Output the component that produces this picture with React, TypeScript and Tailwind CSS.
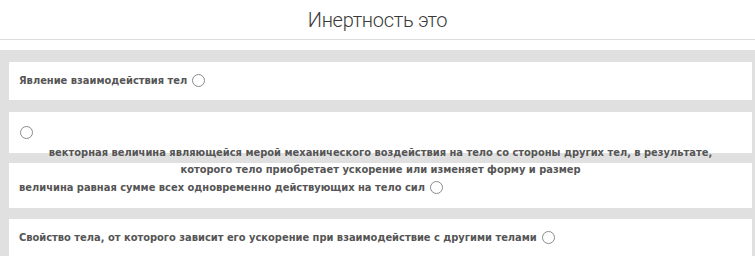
import React from 'react';

const font = { fontFamily: '"DejaVu Sans Condensed", "DejaVu Sans", Verdana, sans-serif' };

function Radio() {
  return <span className="inline-block w-[13px] h-[13px] rounded-full border border-[#8a8a8a] bg-white align-middle ml-[5px] -mt-[2px]" />;
}

export default function App() {
  return (
    <div className="w-[755px] h-[256px] overflow-hidden bg-white">
      <div className="h-[40px] border-b border-[#dcdcdc] flex items-center justify-center">
        <h1 className="text-[20px] font-light text-[#3a3a3a] tracking-[-0.3px] [font-family:Roboto,sans-serif]">Инертность это</h1>
      </div>
      <div className="h-[10px]" />
      <div className="bg-[#e0e0e0] pl-[9px] pr-[3px] pt-[12px] h-[206px] text-[11px] font-bold text-[#555]" style={font}>
        <div className="h-[38px] bg-white px-[10px] flex items-center">
          <span>Явление взаимодействия тел</span>
          <Radio />
        </div>
        <div className="h-[12px]" />
        <div className="h-[41px] bg-white px-[10px] pt-[14px]">
          <div className="h-[13px]">
            <span className="block w-[13px] h-[13px] rounded-full border border-[#8a8a8a] bg-white ml-[1px]" />
          </div>
          <p className="mt-[5px] text-center leading-[17px] whitespace-nowrap">
            векторная величина являющейся мерой механического воздействия на тело со стороны других тел, в результате,
            <br />
            которого тело приобретает ускорение или изменяет форму и размер
          </p>
        </div>
        <div className="h-[10px]" />
        <div className="h-[45px] bg-white px-[10px] pt-[16px] leading-[17px] whitespace-nowrap">
          <span>величина равная сумме всех одновременно действующих на тело сил</span>
          <Radio />
        </div>
        <div className="h-[11px]" />
        <div className="h-[38px] bg-white px-[10px] flex items-center whitespace-nowrap">
          <span>Свойство тела, от которого зависит его ускорение при взаимодействие с другими телами</span>
          <Radio />
        </div>
      </div>
    </div>
  );
}
